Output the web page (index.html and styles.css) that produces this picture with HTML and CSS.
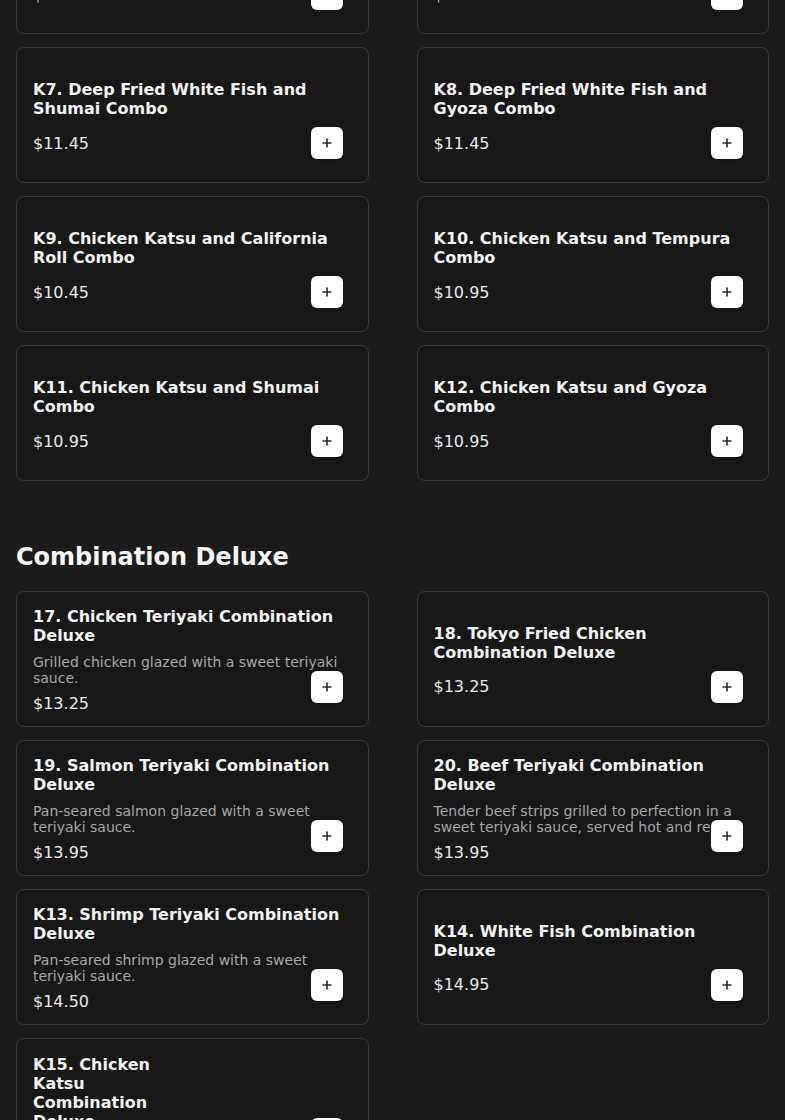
FILE: index.html
```html
<!DOCTYPE html>
<html lang="en">
<head>
<meta charset="utf-8">
<title>Menu</title>
<link rel="stylesheet" href="styles.css">
</head>
<body>
<main class="menu">
  <section class="category category-scrolled">
    <div class="grid">
      <div class="card">
        <h3 class="title">K5. Deep Fried White Fish and California Roll Combo</h3>
        <div class="price">$11.45</div>
        <button class="add" aria-label="Add"><svg viewBox="0 0 12 12"><path d="M6 1.5v9M1.5 6h9"/></svg></button>
      </div>
      <div class="card">
        <h3 class="title">K6. Deep Fried White Fish and Tempura Combo</h3>
        <div class="price">$11.45</div>
        <button class="add" aria-label="Add"><svg viewBox="0 0 12 12"><path d="M6 1.5v9M1.5 6h9"/></svg></button>
      </div>
      <div class="card">
        <h3 class="title">K7. Deep Fried White Fish and Shumai Combo</h3>
        <div class="price">$11.45</div>
        <button class="add" aria-label="Add"><svg viewBox="0 0 12 12"><path d="M6 1.5v9M1.5 6h9"/></svg></button>
      </div>
      <div class="card">
        <h3 class="title">K8. Deep Fried White Fish and Gyoza Combo</h3>
        <div class="price">$11.45</div>
        <button class="add" aria-label="Add"><svg viewBox="0 0 12 12"><path d="M6 1.5v9M1.5 6h9"/></svg></button>
      </div>
      <div class="card">
        <h3 class="title">K9. Chicken Katsu and California Roll Combo</h3>
        <div class="price">$10.45</div>
        <button class="add" aria-label="Add"><svg viewBox="0 0 12 12"><path d="M6 1.5v9M1.5 6h9"/></svg></button>
      </div>
      <div class="card">
        <h3 class="title">K10. Chicken Katsu and Tempura Combo</h3>
        <div class="price">$10.95</div>
        <button class="add" aria-label="Add"><svg viewBox="0 0 12 12"><path d="M6 1.5v9M1.5 6h9"/></svg></button>
      </div>
      <div class="card">
        <h3 class="title">K11. Chicken Katsu and Shumai Combo</h3>
        <div class="price">$10.95</div>
        <button class="add" aria-label="Add"><svg viewBox="0 0 12 12"><path d="M6 1.5v9M1.5 6h9"/></svg></button>
      </div>
      <div class="card">
        <h3 class="title">K12. Chicken Katsu and Gyoza Combo</h3>
        <div class="price">$10.95</div>
        <button class="add" aria-label="Add"><svg viewBox="0 0 12 12"><path d="M6 1.5v9M1.5 6h9"/></svg></button>
      </div>
    </div>
  </section>

  <section class="category">
    <h2 class="category-title">Combination Deluxe</h2>
    <div class="grid">
      <div class="card">
        <h3 class="title">17. Chicken Teriyaki Combination Deluxe</h3>
        <p class="desc">Grilled chicken glazed with a sweet teriyaki sauce.</p>
        <div class="price">$13.25</div>
        <button class="add" aria-label="Add"><svg viewBox="0 0 12 12"><path d="M6 1.5v9M1.5 6h9"/></svg></button>
      </div>
      <div class="card">
        <h3 class="title">18. Tokyo Fried Chicken Combination Deluxe</h3>
        <div class="price">$13.25</div>
        <button class="add" aria-label="Add"><svg viewBox="0 0 12 12"><path d="M6 1.5v9M1.5 6h9"/></svg></button>
      </div>
      <div class="card">
        <h3 class="title">19. Salmon Teriyaki Combination Deluxe</h3>
        <p class="desc">Pan-seared salmon glazed with a sweet teriyaki sauce.</p>
        <div class="price">$13.95</div>
        <button class="add" aria-label="Add"><svg viewBox="0 0 12 12"><path d="M6 1.5v9M1.5 6h9"/></svg></button>
      </div>
      <div class="card">
        <h3 class="title">20. Beef Teriyaki Combination Deluxe</h3>
        <p class="desc">Tender beef strips grilled to perfection in a sweet teriyaki sauce, served hot and ready.</p>
        <div class="price">$13.95</div>
        <button class="add" aria-label="Add"><svg viewBox="0 0 12 12"><path d="M6 1.5v9M1.5 6h9"/></svg></button>
      </div>
      <div class="card">
        <h3 class="title">K13. Shrimp Teriyaki Combination Deluxe</h3>
        <p class="desc">Pan-seared shrimp glazed with a sweet teriyaki sauce.</p>
        <div class="price">$14.50</div>
        <button class="add" aria-label="Add"><svg viewBox="0 0 12 12"><path d="M6 1.5v9M1.5 6h9"/></svg></button>
      </div>
      <div class="card">
        <h3 class="title">K14. White Fish Combination Deluxe</h3>
        <div class="price">$14.95</div>
        <button class="add" aria-label="Add"><svg viewBox="0 0 12 12"><path d="M6 1.5v9M1.5 6h9"/></svg></button>
      </div>
      <div class="card card-narrow">
        <h3 class="title">K15. Chicken Katsu Combination Deluxe</h3>
        <div class="price">$14.95</div>
        <button class="add" aria-label="Add"><svg viewBox="0 0 12 12"><path d="M6 1.5v9M1.5 6h9"/></svg></button>
      </div>
    </div>
  </section>
</main>
</body>
</html>
```

FILE: styles.css
```css
html, body {
  margin: 0;
  padding: 0;
  background: #1c1c1c;
}

body {
  font-family: "DejaVu Sans", "Liberation Sans", sans-serif;
  color: #f2f2f2;
}

.menu {
  padding: 0 16px 40px;
}

/* page is shown scrolled part-way down */
.category-scrolled {
  margin-top: -102px;
}

.category + .category {
  margin-top: 62px;
}

.category-title {
  margin: 0 0 19px;
  font-size: 24px;
  line-height: 1.2;
  font-weight: 700;
  color: #f4f4f4;
}

.grid {
  display: grid;
  grid-template-columns: 1fr 1fr;
  column-gap: 48px;
  row-gap: 13px;
}

.card {
  position: relative;
  box-sizing: border-box;
  min-height: 136px;
  display: flex;
  flex-direction: column;
  justify-content: center;
  padding: 15px 16px 12px;
  background: #181818;
  border: 1px solid #3a3a3a;
  border-radius: 8px;
}

.title {
  margin: 0 0 8px;
  font-size: 16px;
  line-height: 1.2;
  font-weight: 700;
  color: #f2f2f2;
}

.card-narrow {
  padding-top: 16px;
}

.card-narrow .title {
  max-width: 160px;
}

.desc {
  margin: 0;
  font-size: 14px;
  line-height: 1.2;
  color: #a6a6a6;
}

.price {
  margin-top: 7px;
  font-size: 16px;
  line-height: 1.2;
  color: #e8e8e8;
}

.add {
  position: absolute;
  top: 79px;
  right: 25px;
  width: 32px;
  height: 32px;
  padding: 0;
  display: flex;
  align-items: center;
  justify-content: center;
  background: #ffffff;
  border: none;
  border-radius: 6px;
  box-shadow: 0 1px 3px rgba(0, 0, 0, 0.35);
  cursor: pointer;
}

.add svg {
  width: 12px;
  height: 12px;
  fill: none;
  stroke: #2a2a2a;
  stroke-width: 1.6;
}
```
